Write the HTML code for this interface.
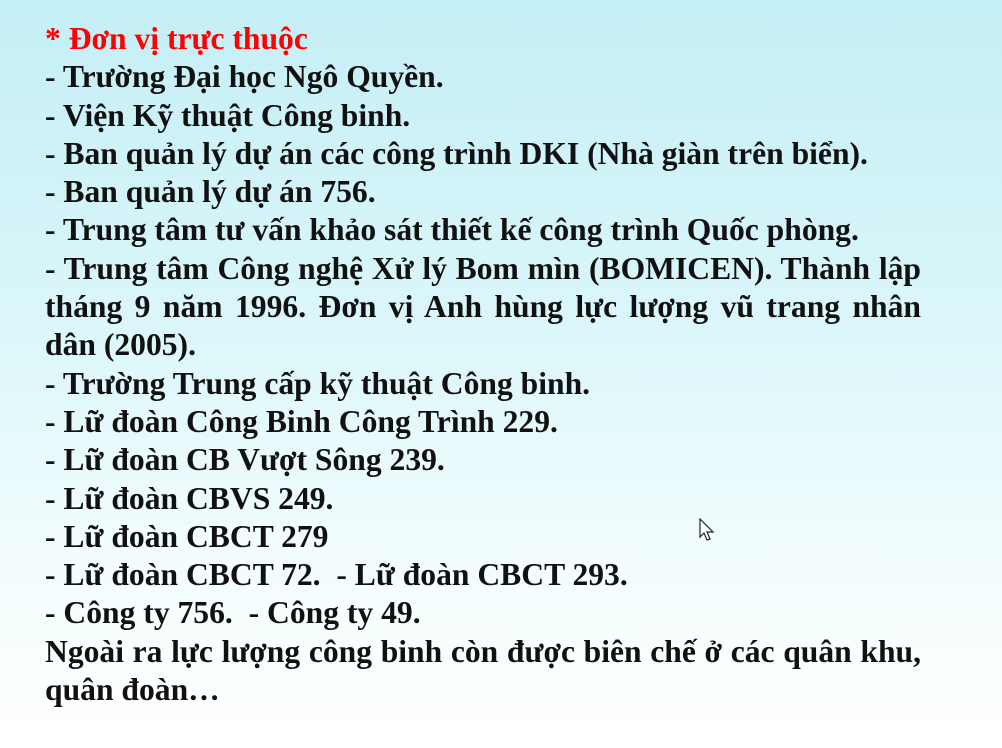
<!DOCTYPE html>
<html><head><meta charset="utf-8"><style>
html,body{margin:0;padding:0}
body{width:1002px;height:748px;overflow:hidden;background:linear-gradient(to bottom,#c4eff6 0%,#dcf7fa 45%,#f3fdfe 75%,#ffffff 100%);font-family:"Liberation Serif",serif;font-weight:bold;font-size:31.6px;color:#111;position:relative}
.wrap{position:absolute;left:45px;top:20px;width:876px;line-height:38.3px}
.wrap div{white-space:nowrap}
.j{text-align:justify;text-align-last:left;white-space:normal!important}
.red{color:#f00}
.cur{position:absolute;left:699px;top:518px}
</style></head><body>
<div class="wrap">
<div class="red">* Đơn vị trực thuộc</div>
<div>- Trường Đại học Ngô Quyền.</div>
<div>- Viện Kỹ thuật Công binh.</div>
<div>- Ban quản lý dự án các công trình DKI (Nhà giàn trên biển).</div>
<div>- Ban quản lý dự án 756.</div>
<div>- Trung tâm tư vấn khảo sát thiết kế công trình Quốc phòng.</div>
<div class="j">- Trung tâm Công nghệ Xử lý Bom mìn (BOMICEN). Thành lập tháng 9 năm 1996. Đơn vị Anh hùng lực lượng vũ trang nhân dân (2005).</div>
<div>- Trường Trung cấp kỹ thuật Công binh.</div>
<div>- Lữ đoàn Công Binh Công Trình 229.</div>
<div>- Lữ đoàn CB Vượt Sông 239.</div>
<div>- Lữ đoàn CBVS 249.</div>
<div>- Lữ đoàn CBCT 279</div>
<div>- Lữ đoàn CBCT 72.&nbsp; - Lữ đoàn CBCT 293.</div>
<div>- Công ty 756.&nbsp; - Công ty 49.</div>
<div class="j">Ngoài ra lực lượng công binh còn được biên chế ở các quân khu, quân đoàn…</div>
</div>
<svg class="cur" width="20" height="30" viewBox="0 0 20 30"><path d="M1 1 L1 19 L5 15 L8 22 L11 21 L8 14 L14 14 Z" fill="#fff" stroke="#222" stroke-width="1.2"/></svg>
</body></html>
